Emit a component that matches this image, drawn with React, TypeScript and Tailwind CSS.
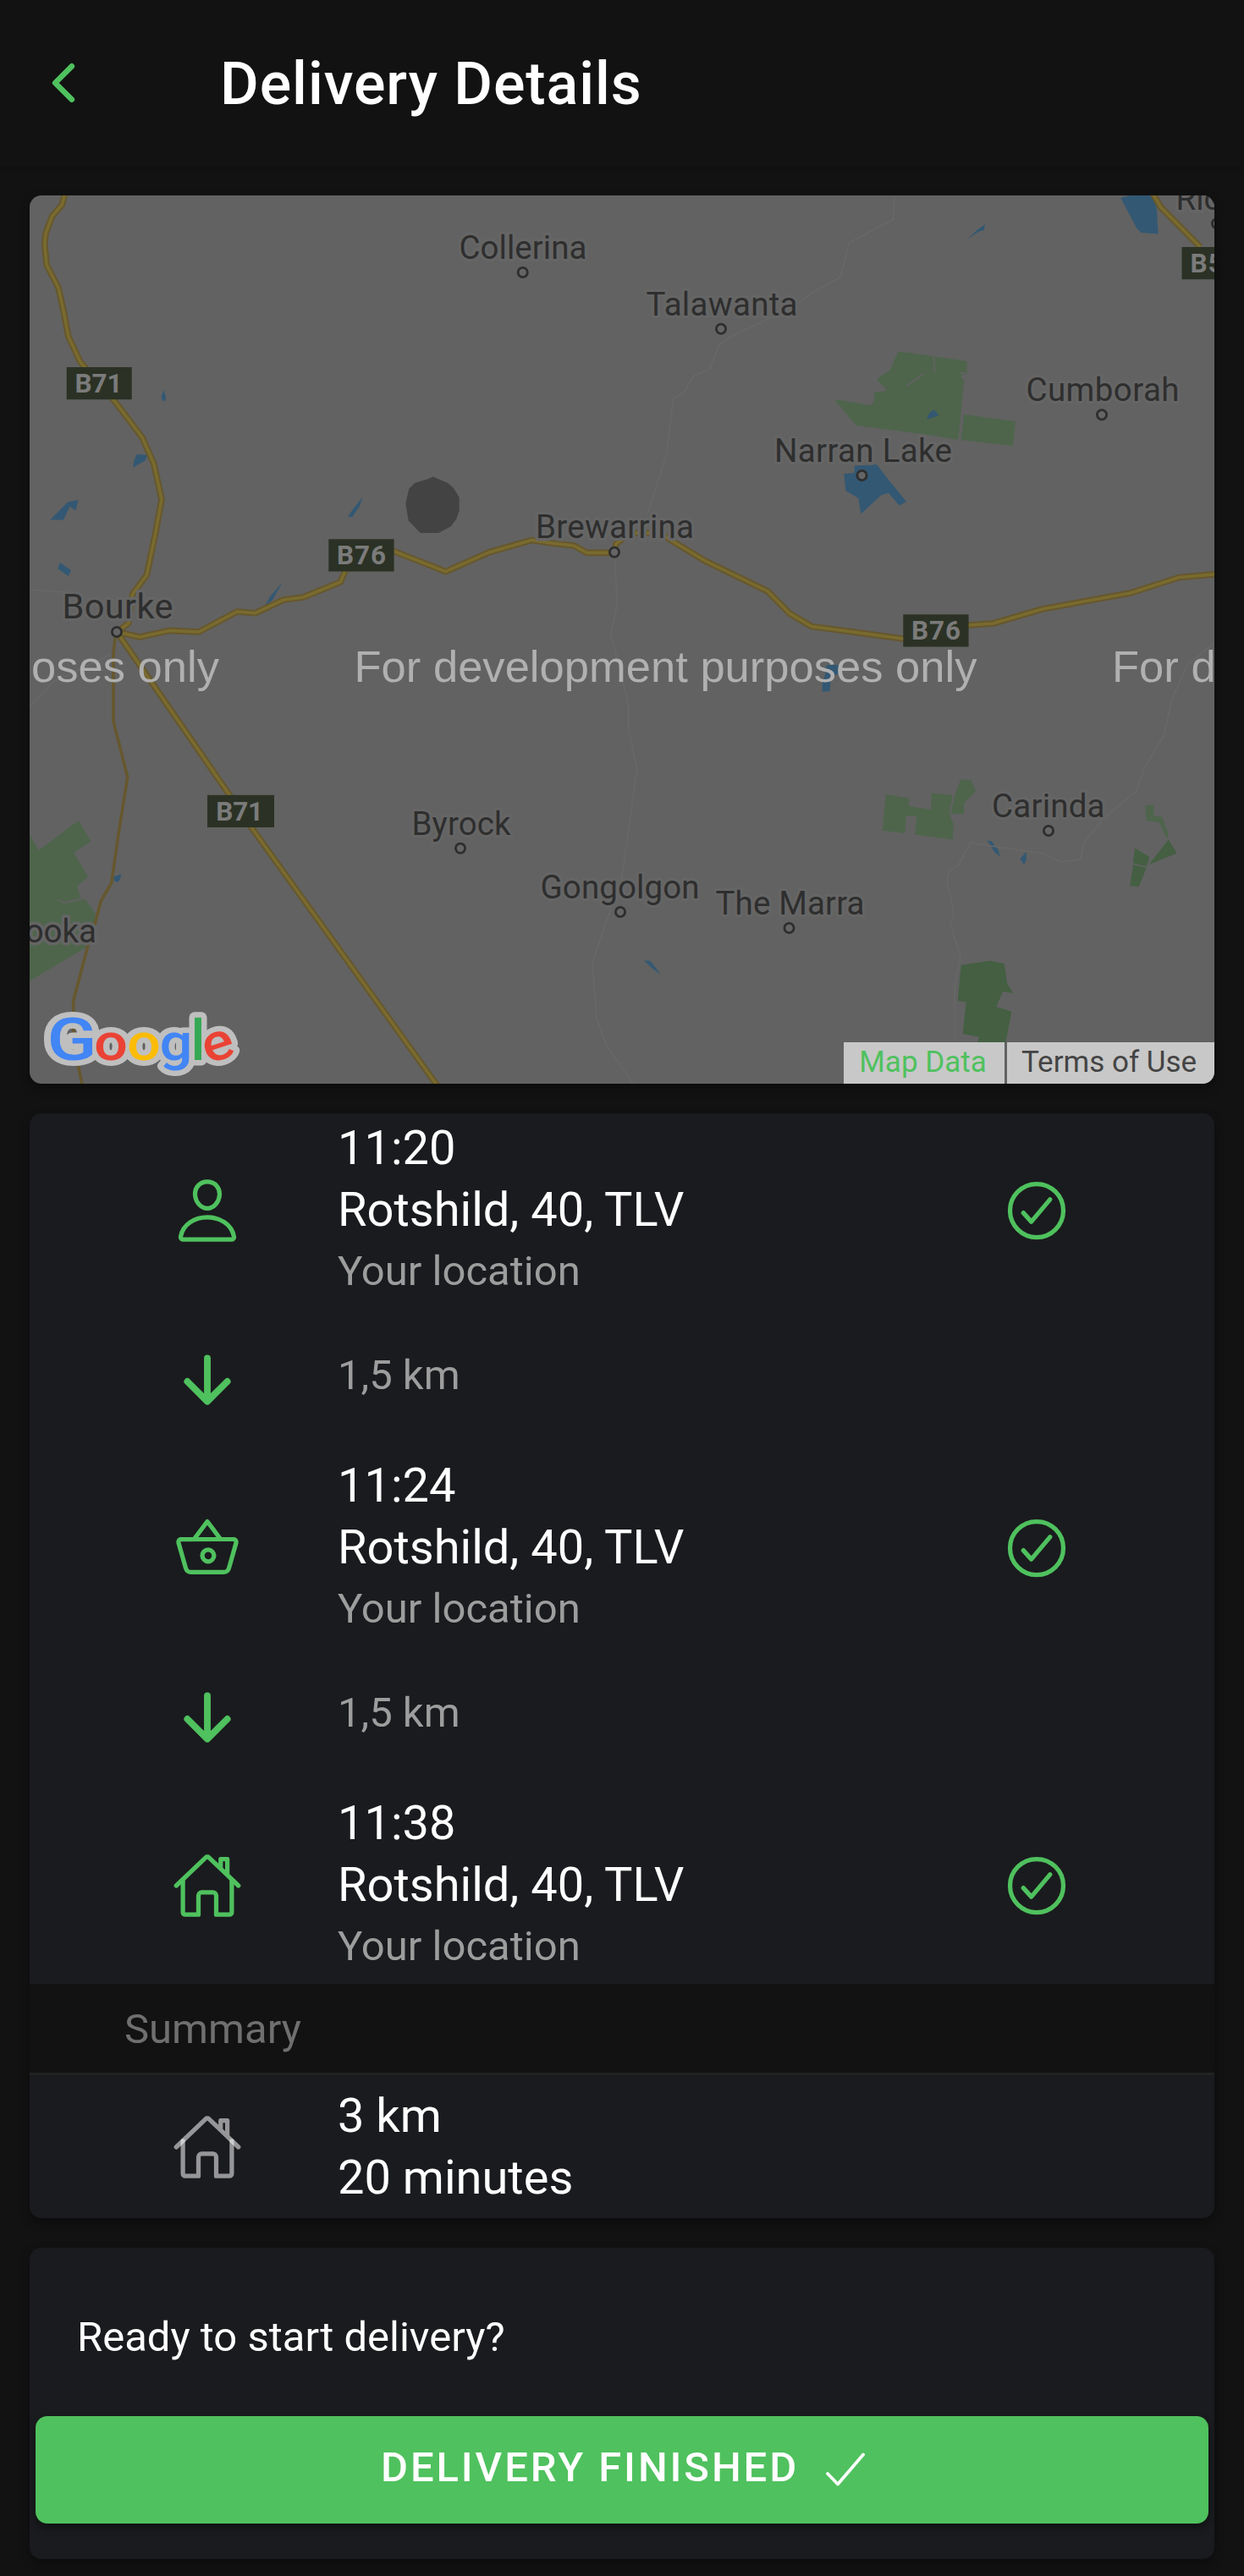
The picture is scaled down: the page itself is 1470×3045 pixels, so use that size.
import type { ReactNode } from "react";
import {
  IoArrowDown,
  IoBasketOutline,
  IoCheckmarkCircleOutline,
  IoChevronBack,
  IoHomeOutline,
  IoPersonOutline,
} from "react-icons/io5";

const towns = [
  { name: "Collerina", x: 542.5, w: 151, y: 305.5, dx: 617.7, dy: 322, size: 38.5 },
  { name: "Talawanta", x: 763.5, w: 179, y: 372.5, dx: 852, dy: 388.7, size: 38.5 },
  { name: "Cumborah", x: 1212.5, w: 181, y: 473.5, dx: 1302, dy: 490.3, size: 38.5 },
  { name: "Narran Lake", x: 915, w: 210, y: 545.5, dx: 1018.5, dy: 562, size: 38.5 },
  { name: "Brewarrina", x: 633, w: 187, y: 636, dx: 726, dy: 652.7, size: 38.5 },
  { name: "Bourke", x: 73.5, w: 131, y: 730.5, dx: 138, dy: 747, size: 41.5 },
  { name: "Byrock", x: 486.5, w: 117, y: 986.5, dx: 544, dy: 1002.7, size: 38.5 },
  { name: "Gongolgon", x: 638.5, w: 188, y: 1062, dx: 733, dy: 1078, size: 38.5 },
  { name: "The Marra", x: 845.5, w: 176, y: 1081, dx: 932.5, dy: 1097, size: 38.5 },
  { name: "Carinda", x: 1172, w: 133.5, y: 965.7, dx: 1239, dy: 982, size: 38.5 },
];

const shields = [
  { name: "B71", x: 78.7, y: 434, w: 77, tx: 88.5, tw: 56 },
  { name: "B76", x: 388.3, y: 637.3, w: 77.3, tx: 398, tw: 58 },
  { name: "B76", x: 1067.3, y: 726.3, w: 77.3, tx: 1077, tw: 58 },
  { name: "B71", x: 245, y: 939.8, w: 79, tx: 255.2, tw: 56 },
  { name: "B55", x: 1396.5, y: 292, w: 77, tx: 1406.5, tw: 58 },
];

const highways = [
  "77.7,225 73.3,242 61.7,255.5 54,275.8 52.7,287.6 55,313 69,340 76,372 80.7,397.5 95,428 135,473.5 168.3,517.5 181.7,548 191,590 184,629 173.3,680 156.7,702 151.7,737 138,747",
  "138,747 165,753 200,745.4 235,747 280,723 301.7,724.7 335,709 358.3,706 402.3,688 410,670 465.7,651.7 510,669 526.7,675.7 578.3,652.7 628.3,638.5 651.7,642 678.3,645 693.3,653.4 726,653.4 728,642.6 745,630 780,630 796.7,641 833.3,663 873.3,682.5 907.3,699 933.3,725.4 959.3,740.6 980,743.3 1067,755 1144.3,739 1173.3,737 1231.7,720 1336.7,700.7 1393.3,682.5 1440,678.5",
  "138,747 270,938 296.7,977.5 518,1285",
  "1360,225 1371.7,245 1418.3,292",
];

const minorRoads = [
  "1056.7,231 1056,259 1003.3,287 993.3,327.5 960,345.8 943.3,358.6 900,380.6 861.7,399 850,407.6 838.3,436.4 819.3,444.8 808.3,463.4 795.7,471 787.3,537.8 765,607",
  "726.7,663 729.3,715 721.7,750 733.3,793.6 742.7,833 742.7,861 752.7,909.6 735,1036 720,1079 700,1138 705,1204 716.7,1236 748.3,1281",
  "1435,760 1403,786 1385,826 1375,870 1353,906 1343,935 1303,968.6 1281.7,995 1276.7,1015.7 1253,1019 1233,1009 1146.7,996.4 1133,1022 1121.7,1029 1119,1042 1127.3,1079 1123,1092 1135,1131 1128,1165 1128,1281",
  "130,774 63,806 35,835",
  "35,697 73,700",
];

const water = [
  "193,461 196,468.5 195.7,474 192,473.5 190.7,469.5",
  "161.7,537 174.3,537.8 171.7,544.5 165,548 157.3,553 158.3,544.5",
  "59.3,614.5 80,593.6 92.7,591 89.3,603.7 82.7,598.6 75,614.5",
  "70.7,665 84,674 80.7,681 68.3,672.3",
  "428.3,587.8 425,598.6 416,611.5 411,610.5 418.3,600.3",
  "334,688 321.7,709.5 313.3,716 319.3,705",
  "134.3,1036.4 143.3,1033 141.7,1040 138.3,1043 135,1040.7",
  "976.7,786 990.7,786 990.7,797 981.7,799 980.7,817 971.7,817.5 971.7,808 975,797",
  "761,1135.4 768.3,1135.7 781,1151.8 771.7,1145.4",
  "1324.3,234 1335,231 1363.3,231 1366.7,245.4 1368.7,276.5 1348.3,275 1343.3,270",
  "1142.7,283 1154,272.4 1160,268 1164,265.6 1162.7,272.4 1158.3,273 1151.7,276.8",
  "1095,496 1098.3,488 1104,484.4 1109.3,491 1103.3,493",
  "997.3,560 1009.3,559 1010,550.6 1036,549 1048.3,565 1071,593 1062.7,597.6 1050,582.7 1041.7,585 1017.3,607.4 1014.3,589 999.3,580",
  "1166.7,993.6 1171.7,994.6 1179.3,1004 1181.7,1012.5 1175,1007",
  "1212.7,1007 1212.7,1017 1210,1022 1205.3,1015",
];

const parks = [
  "985.7,472 1028.3,479 1032.7,475 1033.3,464 1048.3,461.7 1036,448 1051.7,437.4 1061,416 1073.3,416.8 1142.7,427 1142.7,441.4 1135,444.8 1139.3,450 1132.3,520 1093.3,513.4 1011.7,503",
  "1139,490 1200,498 1196.7,527 1135.7,520",
  "35,987 46,1005 92.7,970 107.3,994.6 87.3,1008 104,1036.4 91,1048 96,1063 100.7,1063 115,1083 105,1118 35,1159.6",
  "1046.7,939 1074.3,943.6 1074.3,953 1100,957 1101,937.5 1125.7,940 1121.7,961.4 1126.7,974 1125.7,992.5 1081,986.4 1083.3,965 1071,964 1069.3,985 1042.7,981.8",
  "1135,921.4 1147.3,922 1153.3,935.4 1139.3,949 1139,962.5 1123.3,961.4 1128.3,940",
  "1352.7,951.8 1363.3,951.8 1363.7,964 1373.3,965.7 1380.7,986 1379.3,992 1370,972 1355,970",
];

const reserves = [
  "1380.7,992.5 1390.7,1008.6 1357.7,1022",
  "1341,1002.5 1358.3,1013 1355,1024 1339,1020.4",
  "1339,1022 1354.7,1025.7 1345.7,1048 1335.3,1047",
  "1135.7,1140.7 1170,1135.7 1186.7,1139 1190,1162 1197.3,1174 1185,1172 1177.3,1190 1195.3,1196 1187.3,1238 1173.3,1238 1170,1247 1160,1247 1153.3,1281 1143.3,1281 1156.7,1225.7 1137.7,1222 1141.7,1184.6 1131.7,1183",
];

const logo = [
  { ch: "G", x: 55.5, w: 59, size: 70, color: "#4285f4", turn: undefined },
  { ch: "o", x: 111, w: 40, size: 62, color: "#ea4335", turn: undefined },
  { ch: "o", x: 150, w: 40, size: 62, color: "#fbbc05", turn: undefined },
  { ch: "g", x: 188.5, w: 39, size: 62, color: "#4285f4", turn: undefined },
  { ch: "l", x: 225.5, w: 17, size: 66, color: "#34a853", turn: undefined },
  { ch: "e", x: 239.5, w: 37, size: 62, color: "#ea4335", turn: "rotate(-18 258 1237)" },
];

const haloText = {
  fontFamily: "Roboto, sans-serif",
  fill: "#2e2e2e",
  stroke: "#656565",
  strokeWidth: 7,
  strokeLinejoin: "round",
  paintOrder: "stroke",
} as const;

function MapDrawing() {
  return (
    <svg viewBox="35 231 1400 1050" className="block h-full w-full">
      <rect x="35" y="231" width="1400" height="1050" fill="#626262" />
      <g fill="#4e654c">
        {parks.map((p) => <polygon key={p} points={p} />)}
      </g>
      <path d="M1103.3 421L1104.5 440M1135 441L1142 441M1071.7 456L1091.7 441.4M68 1064L76 1067L96 1063" stroke="#626262" strokeWidth="1.8" fill="none" />
      <g fill="#445f42">
        {reserves.map((p) => <polygon key={p} points={p} />)}
      </g>
      <g fill="#335873">
        {water.map((p) => <polygon key={p} points={p} />)}
      </g>
      <polygon
        fill="#434343"
        points="511.7,563.5 529.3,571 536,577 542.7,588 542.7,603.7 539,614 532.7,622.3 518.3,630 496.7,630 482.7,615.5 479.3,595 483.3,577.7 490,571 505,566.5"
      />
      <g fill="none" stroke="#686868" strokeWidth="1.6">
        {minorRoads.map((p) => <polyline key={p} points={p} />)}
      </g>
      <polyline
        fill="none"
        stroke="#66572e"
        strokeWidth="3.6"
        points="136,754 134,772 134,852.5 150.7,918.6 140,986 131.7,1043.6 119.3,1065 112.7,1090 103.3,1120 86.7,1183 87,1240 92.7,1261 97,1282"
      />
      <g fill="none" stroke="#66572d" strokeWidth="7.6" strokeLinejoin="round">
        {highways.map((p) => <polyline key={p} points={p} />)}
      </g>
      <g fill="none" stroke="#796b2f" strokeWidth="3.6" strokeLinejoin="round">
        {highways.map((p) => <polyline key={p} points={p} />)}
      </g>

      {shields.map((s) => (
        <g key={s.name + s.x}>
          <rect x={s.x} y={s.y} width={s.w} height="38.2" fill="#2b3225" />
          <text x={s.tx} y={s.y + 30} textLength={s.tw} fontFamily="Roboto, sans-serif" fontWeight="700" fontSize="31.5" fill="#7b7b7b">
            {s.name}
          </text>
        </g>
      ))}

      {towns.map((t) => (
        <g key={t.name}>
          <text {...haloText} x={t.x} y={t.y} fontSize={t.size} textLength={t.w}>{t.name}</text>
          <circle cx={t.dx} cy={t.dy} r="5.6" fill="#656565" stroke="#2e2e2e" strokeWidth="2.8" />
        </g>
      ))}
      <text {...haloText} x="114" y="1114" fontSize="38.5" textAnchor="end">ooka</text>
      <text {...haloText} x="1389.5" y="247.7" fontSize="38.5">Ric</text>
      <circle cx="1438" cy="264.3" r="5.6" fill="#656565" stroke="#2e2e2e" strokeWidth="2.8" />

      <g fontFamily="'Liberation Sans', Arial, sans-serif" fontSize="52.5" fill="#b0b0b0">
        <text x="-477" y="806.4" textLength="736">For development purposes only</text>
        <text x="418.5" y="806.4" textLength="736">For development purposes only</text>
        <text x="1314" y="806.4" textLength="736">For development purposes only</text>
      </g>

      <g fontFamily="Roboto, sans-serif" fontWeight="500" strokeLinejoin="round">
        <g fill="#bfbfbf" stroke="#bfbfbf" strokeWidth="13">
          {logo.map((l) => (
            <text key={l.x} x={l.x} y="1253" fontSize={l.size} transform={l.turn} textLength={l.w} lengthAdjust="spacingAndGlyphs">{l.ch}</text>
          ))}
        </g>
        {logo.map((l) => (
          <text key={l.x} x={l.x} y="1253" fontSize={l.size} transform={l.turn} textLength={l.w} lengthAdjust="spacingAndGlyphs" fill={l.color}>{l.ch}</text>
        ))}
      </g>
    </svg>
  );
}

function Stop({ icon, time }: { icon: ReactNode; time: string }) {
  return (
    <div className="flex h-[219px] items-center">
      <div className="ml-[168px] mt-[3px] size-[84px] text-[84px] text-[#4fc15e]">{icon}</div>
      <div className="ml-[112px] flex-1 text-[56px] leading-[73px] text-white">
        <p>{time}</p>
        <p>Rotshild, 40, TLV</p>
        <p className="-mt-px text-[49px] text-[#9d9d9e]">Your location</p>
      </div>
      <IoCheckmarkCircleOutline className="mr-[168px] mt-[3px] size-[84px] text-[#4fc15e]" />
    </div>
  );
}

function Leg() {
  return (
    <div className="flex h-[180px] items-start pt-[50px]">
      <IoArrowDown className="ml-[168px] size-[84px] text-[#4fc15e]" />
      <p className="ml-[112px] text-[49px] leading-[73px] text-[#9d9d9e]">1,5 km</p>
    </div>
  );
}

const cardShadow = "shadow-[0_5px_12px_rgba(0,0,0,0.35)]";

export default function App() {
  return (
    <div className="h-[3045px] w-[1470px] overflow-hidden bg-[#121212] font-['Roboto',sans-serif]">
      <header className="flex h-[196px] items-center pl-10 shadow-[0_3px_6px_rgba(0,0,0,0.14)]">
        <IoChevronBack className="size-[70px] text-[#4fc15e]" />
        <h1 className="mt-[2px] ml-[150px] text-[70px] font-medium leading-[84px] tracking-[0.95px] text-white">Delivery Details</h1>
      </header>

      <main className="flex flex-col gap-[35px] px-[35px] pt-[35px]">
        <section className={`relative h-[1050px] overflow-hidden rounded-[14px] ${cardShadow}`}>
          <MapDrawing />
          <div className="absolute right-0 bottom-0 flex h-[49px] gap-[3px] bg-[#626262] text-[35px] leading-[48px]">
            <span className="w-[190px] bg-[#c8c8c8] pr-[3px] text-center text-[#4fc15e]">Map Data</span>
            <span className="w-[245px] bg-[#c8c8c8] pr-[4px] text-center text-[#444444]">Terms of Use</span>
          </div>
        </section>

        <section className={`h-[1306px] overflow-hidden rounded-[14px] bg-[#1a1b1e] pt-[4px] ${cardShadow}`}>
          <Stop icon={<IoPersonOutline />} time="11:20" />
          <Leg />
          <Stop icon={<IoBasketOutline />} time="11:24" />
          <Leg />
          <Stop icon={<IoHomeOutline />} time="11:38" />
          <div className="mt-[8px] h-[108px] border-b-[3px] border-[#222222] bg-[#121212] pl-[112px] text-[49px] leading-[107px] text-[#6f6f6f]">
            Summary
          </div>
          <div className="flex h-[169px] items-center">
            <IoHomeOutline className="ml-[168px] size-[84px] text-white/54" />
            <div className="ml-[112px] mt-[1px] text-[56px] leading-[73px] text-white">
              <p>3 km</p>
              <p>20 minutes</p>
            </div>
          </div>
        </section>

        <section className={`h-[368px] rounded-[14px] bg-[#1a1b1e] px-[7px] pt-[69px] ${cardShadow}`}>
          <p className="pl-[49px] text-[49px] leading-[73px] text-white">Ready to start delivery?</p>
          <button className="mt-[57px] flex h-[127px] w-full items-center rounded-[14px] bg-[#4fc15e] pb-[5px] pl-[408px] text-[49px] font-medium tracking-[2.9px] text-white shadow-[0_5px_10px_rgba(0,0,0,0.4)]">
            DELIVERY FINISHED
            <svg viewBox="0 0 46 40" className="mt-[4px] ml-[32px] h-[40px] w-[46px]" fill="none" stroke="currentColor" strokeWidth="3.8" strokeLinecap="round" strokeLinejoin="round">
              <path d="M2 25L14 37.5L44 2.5" />
            </svg>
          </button>
        </section>
      </main>
    </div>
  );
}
